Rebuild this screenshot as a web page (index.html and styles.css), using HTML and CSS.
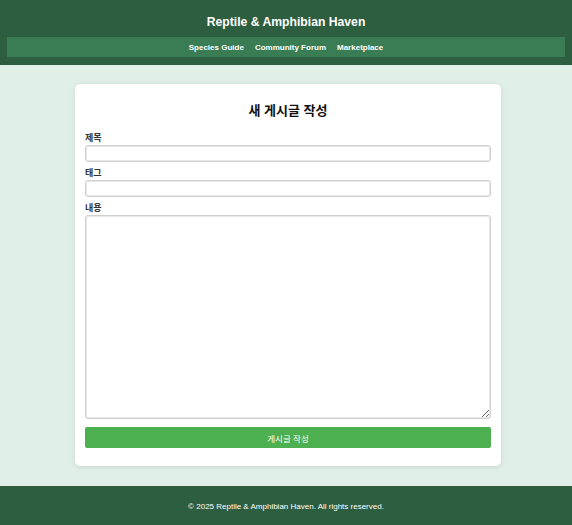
FILE: index.html
```html
<!DOCTYPE html>
<html lang="ko">
<head>
<meta charset="utf-8">
<title>새 게시글 작성</title>
<link rel="stylesheet" href="styles.css">
</head>
<body>
<header class="site-header">
  <h1 class="site-title">Reptile &amp; Amphibian Haven</h1>
  <nav class="site-nav">
    <a href="#">Species Guide</a>
    <a href="#">Community Forum</a>
    <a href="#">Marketplace</a>
  </nav>
</header>
<main class="main">
  <section class="card">
    <h2 class="card-title">새 게시글 작성</h2>
    <form class="post-form">
      <label class="field-label" for="title">제목</label>
      <input class="field-input" id="title" type="text">
      <label class="field-label" for="tags">태그</label>
      <input class="field-input" id="tags" type="text">
      <label class="field-label" for="content">내용</label>
      <textarea class="field-textarea" id="content"></textarea>
      <button class="submit-btn" type="button">게시글 작성</button>
    </form>
  </section>
</main>
<footer class="site-footer">
  <p>© 2025 Reptile &amp; Amphibian Haven. All rights reserved.</p>
</footer>
</body>
</html>
```

FILE: styles.css
```css
* { box-sizing: border-box; }
html, body { margin: 0; padding: 0; }
body {
  font-family: "Liberation Sans", Arial, "Noto Sans CJK KR", sans-serif;
  background: #e0f0e8;
  color: #222;
}
.site-header {
  background: #2d5e3f;
  padding: 14px 7px 8px;
  color: #fff;
}
.site-title {
  margin: 0 0 7px;
  font-size: 12.2px;
  line-height: 16px;
  text-align: center;
  font-weight: bold;
}
.site-nav {
  background: #3a7c54;
  height: 20px;
  display: flex;
  justify-content: center;
  align-items: center;
  gap: 11px;
}
.site-nav a {
  color: #fff;
  text-decoration: none;
  font-size: 8px;
  font-weight: bold;
}
.main {
  padding: 19px 0 20px 4px;
  display: flex;
  justify-content: center;
}
.card {
  width: 426px;
  background: #fff;
  border-radius: 5px;
  box-shadow: 0 1px 5px rgba(0,0,0,0.12);
  padding: 10px 10px 18px;
}
.card-title {
  margin: 9px 0 14px;
  font-family: "Liberation Sans", "Noto Sans CJK KR", sans-serif;
  font-size: 13px;
  line-height: 16px;
  text-align: center;
  color: #111;
  font-weight: bold;
}
.post-form {
  display: flex;
  flex-direction: column;
}
.field-label {
  font-family: "Noto Sans CJK KR", sans-serif;
  font-size: 9px;
  line-height: 10px;
  font-weight: bold;
  color: #333;
  margin-bottom: 2px;
}
.field-input {
  height: 17px;
  border: 1px solid #d0d0d0;
  border-radius: 3px;
  box-shadow: inset 0 0 0 1px #e8e8e8;
  margin-bottom: 6px;
  font-size: 9px;
}
.field-textarea {
  height: 204px;
  border: 1px solid #d0d0d0;
  border-radius: 3px;
  box-shadow: inset 0 0 0 1px #e8e8e8;
  resize: vertical;
  margin-bottom: 8px;
}
.submit-btn {
  height: 21px;
  border: none;
  border-radius: 2px;
  background: #4caf50;
  color: #fff;
  font-family: "Noto Sans CJK KR", sans-serif;
  font-size: 8.5px;
  cursor: pointer;
}
.site-footer {
  background: #2d5e3f;
  color: #fff;
  text-align: center;
  padding: 16px 0 20px;
}
.site-footer p {
  margin: 0;
  font-size: 8px;
  line-height: 10px;
}
```
